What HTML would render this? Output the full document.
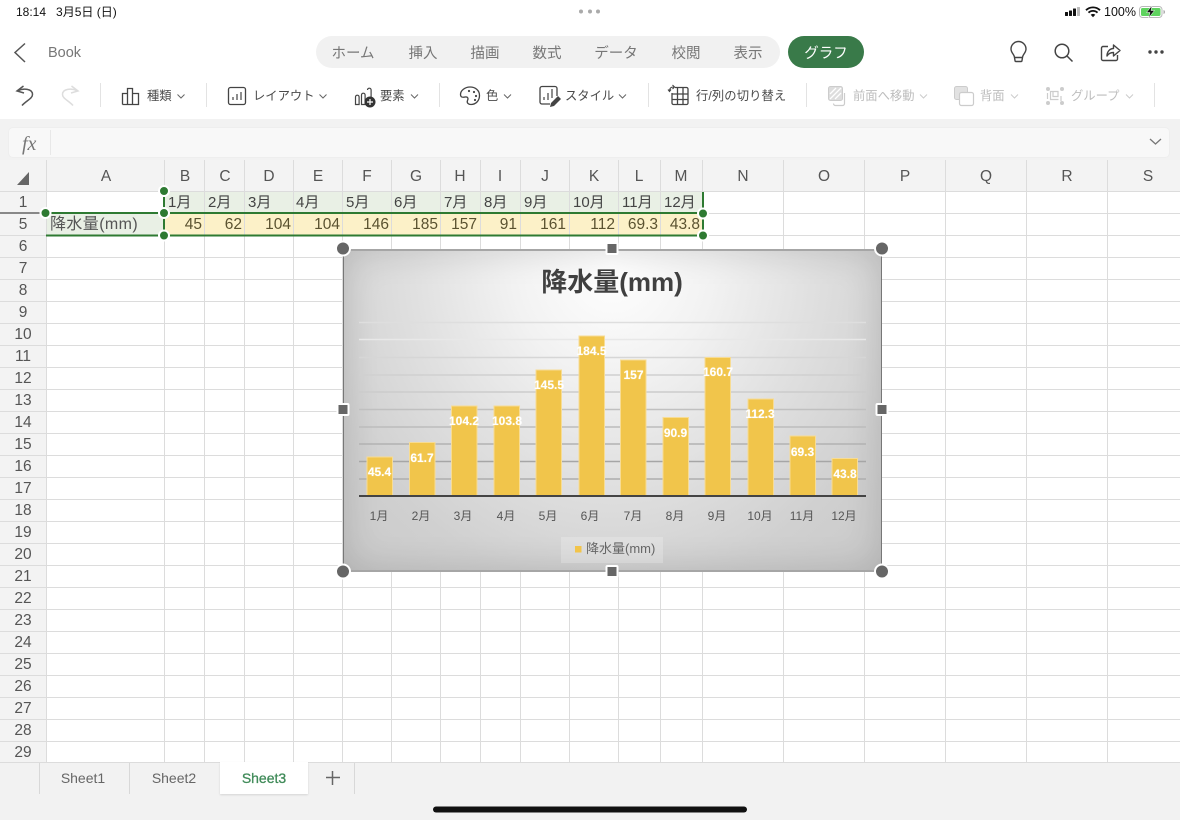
<!DOCTYPE html>
<html lang="ja"><head><meta charset="utf-8"><title>Book</title>
<style>
html,body{margin:0;padding:0;background:#fff}
#p{position:relative;width:1180px;height:820px;overflow:hidden;background:#fff;font-family:"Liberation Sans","Noto Sans CJK JP",sans-serif}
.t{position:absolute;white-space:nowrap;line-height:1}
.c{transform:translateX(-50%)}
svg{position:absolute;left:0;top:0;overflow:visible}
.tb{font-size:12.3px;color:#4a4a4a;top:90px}
.dis{color:#bdbdbd}
.tab{font-size:14.5px;color:#777;top:46.500px}
.col{font-size:15.5px;color:#555;top:169px}
.row{font-size:15.5px;color:#555}
.m{font-size:15px;color:#444;top:195px}
.v{font-size:15.5px;color:#5a5230;top:217px;text-align:right}
.bl{font-size:12px;font-weight:bold;color:#fff;text-shadow:0 0 1px rgba(255,255,255,.6)}
.cat{font-size:12px;color:#555;top:510px}
</style></head><body><div id="p">

<!-- status bar -->
<div class="t" style="left:16px;top:6px;font-size:12px;color:#111">18:14&nbsp;&nbsp;&nbsp;3月5日 (日)</div>
<svg width="1180" height="24">
<circle cx="581" cy="11.5" r="2" fill="#aaa"/><circle cx="590" cy="11.5" r="2" fill="#aaa"/><circle cx="598" cy="11.5" r="2" fill="#aaa"/>
<rect x="1065" y="12" width="3" height="4" rx=".5" fill="#111"/><rect x="1069" y="10.5" width="3" height="5.5" rx=".5" fill="#111"/><rect x="1073" y="8.5" width="3" height="7.5" rx=".5" fill="#111"/><rect x="1077" y="7" width="3" height="9" rx=".5" fill="#bbb"/>
<path d="M1086 10.2a10 10 0 0 1 14 0M1088.500 12.700a6.500 6.500 0 0 1 9 0" fill="none" stroke="#111" stroke-width="1.800"/><path d="M1090.700 14.800a3.400 3.400 0 0 1 4.600 0L1093 17.200z" fill="#111"/>
<rect x="1139.5" y="6.5" width="22.500" height="11" rx="3" fill="none" stroke="#b9b9b9"/><rect x="1141" y="8" width="19.500" height="8" rx="1.5" fill="#5fd35f"/><path d="M1163.500 10v4a2 2 0 0 0 1.500-2 2 2 0 0 0-1.500-2z" fill="#aaa"/>
<path d="M1152 5.5l-5.5 7h3.5l-1.5 5.5 6-7.5h-3.5z" fill="#111" stroke="#fff" stroke-width=".5"/>
</svg>
<div class="t" style="left:1104px;top:6px;font-size:12.500px;color:#111">100%</div>

<!-- top nav -->
<svg width="1180" height="120">
<path d="M25 43.5l-10 9 10 9.500" fill="none" stroke="#555" stroke-width="1.500"/>
<rect x="316" y="36" width="464" height="32" rx="16" fill="#f1f1f1"/>
<rect x="788" y="36" width="76" height="32" rx="16" fill="#397a49"/>
<path d="M1014.500 57.500c0-3-3.500-4.500-3.500-8.500a7.500 7.500 0 0 1 15 0c0 4-3.500 5.500-3.500 8.500zM1014.500 57.500l.5 3a1 1 0 0 0 1 1h5a1 1 0 0 0 1-1l.5-3" fill="none" stroke="#444" stroke-width="1.400" stroke-linejoin="round"/>
<circle cx="1062" cy="51" r="6.800" fill="none" stroke="#444" stroke-width="1.500"/><path d="M1067 56l5.500 5.500" stroke="#444" stroke-width="1.500"/>
<path d="M1108 46.500h-5a1.500 1.500 0 0 0-1.500 1.500v11a1.500 1.500 0 0 0 1.500 1.500h13a1.500 1.500 0 0 0 1.500-1.500v-4M1107 56c0-4.500 3-7.500 6.500-7.500V45l6.500 5.500-6.500 5.500v-3.500c-3 0-5 1-6.500 3.500z" fill="none" stroke="#444" stroke-width="1.400" stroke-linejoin="round"/>
<circle cx="1150" cy="52" r="1.700" fill="#444"/><circle cx="1156" cy="52" r="1.700" fill="#444"/><circle cx="1162" cy="52" r="1.700" fill="#444"/>
<!-- separators -->
<g stroke="#e3e3e3"><path d="M100.500 83v24M206.500 83v24M439.500 83v24M648.500 83v24M806.500 83v24M1154.500 83v24"/></g>
<!-- undo / redo -->
<path d="M23.500 86l-6.500 5 7 2M17.500 91c6-3 15-2.500 15 3.500 0 4-6 6-10.500 11" fill="none" stroke="#555" stroke-width="1.500"/>
<path d="M71.500 86l6.500 5-7 2M77.500 91c-6-3-15-2.500-15 3.500 0 4 6 6 10.500 11" fill="none" stroke="#ddd" stroke-width="1.500"/>
<!-- type -->
<path d="M122.500 104.500v-11h5v11M127.500 104.500v-16h5v16M132.500 104.500v-11h6v11zM122.500 104.500h16" fill="none" stroke="#444" stroke-width="1.300"/>
<path d="M177.500 94.500l3.500 3.500 3.500-3.500" fill="none" stroke="#666"/>
<!-- layout -->
<rect x="228.500" y="87.500" width="17" height="17" rx="2" fill="none" stroke="#444" stroke-width="1.300"/><path d="M233 100v-3M237 100v-6M241 100v-8" stroke="#444" stroke-width="1.200"/>
<path d="M319.500 94.500l3.500 3.500 3.500-3.500" fill="none" stroke="#666"/>
<!-- element -->
<path d="M355.500 97a1.800 1.800 0 0 1 3.600 0v7.500h-3.600zM361.500 95a1.800 1.800 0 0 1 3.600 0v9.500h-3.600zM367.500 90a1.800 1.800 0 0 1 3.600 0v8" fill="none" stroke="#444" stroke-width="1.200"/>
<circle cx="370" cy="102" r="5.500" fill="#333"/><path d="M367 102h6M370 99v6" stroke="#fff" stroke-width="1.200"/>
<path d="M411 94.500l3.500 3.500 3.500-3.500" fill="none" stroke="#666"/>
<!-- colour -->
<path d="M470 87c-5 0-9.500 3.500-9.500 7.500 0 3 2.500 3 4.500 2.500 3-.5 3.500 1.500 2.500 3.500-1 2.500 1 4 3.500 4 5 0 8.500-4 8.500-9 0-5-4-8.500-9.500-8.500z" fill="none" stroke="#444" stroke-width="1.300"/>
<circle cx="469" cy="91" r="1.100" fill="#444"/><circle cx="474" cy="92" r="1.100" fill="#444"/><circle cx="476" cy="96" r="1.100" fill="#444"/><circle cx="475" cy="100" r="1.100" fill="#444"/>
<path d="M504 94.500l3.500 3.500 3.500-3.500" fill="none" stroke="#666"/>
<!-- style -->
<path d="M550 104h-8a2 2 0 0 1-2-2V88.500a2 2 0 0 1 2-2h13a2 2 0 0 1 2 2v7.500" fill="none" stroke="#444" stroke-width="1.300"/><path d="M544 100v-3M548 100v-7M552 98v-9" stroke="#444" stroke-width="1.200"/>
<path d="M550 107l1-4 7-7 3 3-7 7z" fill="#444"/>
<path d="M619 94.500l3.500 3.500 3.500-3.500" fill="none" stroke="#666"/>
<!-- switch -->
<path d="M675 87.500h11.500a1.500 1.500 0 0 1 1.500 1.500v14a1.500 1.500 0 0 1-1.500 1.500h-13a1.500 1.500 0 0 1-1.500-1.500v-10M672 94h16M672 99.500h16M677.500 87.500v17M683 87.500v17" fill="none" stroke="#444" stroke-width="1.300"/>
<path d="M669.500 91c0-2.500 1.500-4 4-4M672.500 85l2 2-2 2M668 89.500l1.500 2 1.500-2" fill="none" stroke="#444" stroke-width="1.100"/>
<!-- bring forward -->
<rect x="828.500" y="86.500" width="14" height="14" rx="2" fill="#ddd" stroke="#ccc"/><path d="M830 94l6-6M830 99l11-11M835 99l6-6" stroke="#fff" stroke-width="1.300"/>
<path d="M844.500 93v10.500a2 2 0 0 1-2 2h-7a2 2 0 0 1-2-2" fill="none" stroke="#ccc" stroke-width="1.200"/>
<path d="M920 94.500l3.500 3.500 3.500-3.500" fill="none" stroke="#ccc"/>
<!-- send back -->
<rect x="954.500" y="86.500" width="13" height="13" rx="2" fill="#e2e2e2" stroke="#ccc"/><rect x="959.500" y="92.500" width="14" height="13" rx="2" fill="#fff" stroke="#ccc" stroke-width="1.200"/>
<path d="M1011 94.500l3.500 3.500 3.500-3.500" fill="none" stroke="#ccc"/>
<!-- group -->
<g fill="#ccc"><circle cx="1048" cy="89" r="2"/><circle cx="1062" cy="89" r="2"/><circle cx="1048" cy="103" r="2"/><circle cx="1062" cy="103" r="2"/></g>
<path d="M1053 91.500h5v5h-5zM1053 91.500h-2.500v8h8M1061 96v5M1047.500 93v6" fill="none" stroke="#ccc" stroke-width="1.200"/>
<path d="M1126 94.500l3.500 3.500 3.500-3.500" fill="none" stroke="#ccc"/>
</svg>
<div class="t" style="left:48px;top:46px;font-size:14.500px;color:#777">Book</div>
<div class="t c tab" style="left:353px">ホーム</div>
<div class="t c tab" style="left:423px">挿入</div>
<div class="t c tab" style="left:485px">描画</div>
<div class="t c tab" style="left:547px">数式</div>
<div class="t c tab" style="left:616px">データ</div>
<div class="t c tab" style="left:686px">校閲</div>
<div class="t c tab" style="left:748px">表示</div>
<div class="t c tab" style="left:826px;color:#fff">グラフ</div>
<div class="t tb" style="left:147px">種類</div>
<div class="t tb" style="left:253px">レイアウト</div>
<div class="t tb" style="left:380px">要素</div>
<div class="t tb" style="left:486px">色</div>
<div class="t tb" style="left:565px">スタイル</div>
<div class="t tb" style="left:696px;letter-spacing:.1px">行/列の切り替え</div>
<div class="t tb dis" style="left:853px">前面へ移動</div>
<div class="t tb dis" style="left:980px">背面</div>
<div class="t tb dis" style="left:1071px">グループ</div>

<!-- formula bar -->
<div style="position:absolute;left:0;top:119px;width:1180px;height:41px;background:#f2f2f2"></div>
<div style="position:absolute;left:9px;top:128px;width:1160px;height:29px;background:#f8f8f8;border-radius:4px;box-shadow:0 0 0 1px #eee"></div>
<div style="position:absolute;left:50px;top:130px;width:1px;height:25px;background:#e8e8e8"></div>
<div class="t" style="left:22px;top:133px;font:italic 20px 'Liberation Serif',serif;color:#777">fx</div>
<svg width="1180" height="160"><path d="M1150 139l5.500 5 5.500-5" fill="none" stroke="#777" stroke-width="1.300"/></svg>

<!-- sheet grid -->
<div style="position:absolute;left:0;top:160px;width:1180px;height:31px;background:#f3f3f3"></div>
<div style="position:absolute;left:0;top:160px;width:46px;height:602px;background:#f3f3f3"></div>
<div style="position:absolute;left:164px;top:192px;width:539px;height:21px;background:#e9f0e5"></div>
<div style="position:absolute;left:46px;top:214px;width:118px;height:21px;background:#e9f0e5"></div>
<div style="position:absolute;left:164px;top:214px;width:539px;height:21px;background:#fcf1c8"></div>
<svg width="1180" height="762">
<g stroke="#dcdcdc" fill="none">
<path d="M46.500 160v602M164.500 160v602M204.500 160v602M244.500 160v602M293.500 160v602M342.500 160v602M391.500 160v602M440.500 160v602M480.500 160v602M520.500 160v602M569.500 160v602M618.500 160v602M660.500 160v602M702.500 160v602M783.500 160v602M864.500 160v602M945.500 160v602M1026.500 160v602M1107.500 160v602"/>
<path d="M0 191.500h1180M0 213.500h1180M0 235.500h1180M0 257.500h1180M0 279.500h1180M0 301.500h1180M0 323.500h1180M0 345.500h1180M0 367.500h1180M0 389.500h1180M0 411.500h1180M0 433.500h1180M0 455.500h1180M0 477.500h1180M0 499.500h1180M0 521.500h1180M0 543.500h1180M0 565.500h1180M0 587.500h1180M0 609.500h1180M0 631.500h1180M0 653.500h1180M0 675.500h1180M0 697.500h1180M0 719.500h1180M0 741.500h1180"/>
</g>
<path d="M0 213h46" stroke="#888" stroke-width="2"/>
<path d="M29 172v13H17z" fill="#666"/>
<g stroke="#2e7a32" stroke-width="2" fill="none"><path d="M46 213h657M46 235.500h657M164 197v34M703 192v21M703 213v22"/></g>
<g fill="#2e7a32" stroke="#fff" stroke-width="2"><circle cx="164" cy="191" r="5"/><circle cx="45.500" cy="213" r="5"/><circle cx="164" cy="213" r="5"/><circle cx="703" cy="213.500" r="5"/><circle cx="164" cy="235.500" r="5"/><circle cx="703" cy="235.500" r="5"/></g>
</svg>

<div class="t c col" style="left:106px">A</div><div class="t c col" style="left:185px">B</div><div class="t c col" style="left:225px">C</div><div class="t c col" style="left:269px">D</div><div class="t c col" style="left:318px">E</div><div class="t c col" style="left:367px">F</div><div class="t c col" style="left:416px">G</div><div class="t c col" style="left:460px">H</div><div class="t c col" style="left:500px">I</div><div class="t c col" style="left:545px">J</div><div class="t c col" style="left:594px">K</div><div class="t c col" style="left:639px">L</div><div class="t c col" style="left:681px">M</div><div class="t c col" style="left:743px">N</div><div class="t c col" style="left:824px">O</div><div class="t c col" style="left:905px">P</div><div class="t c col" style="left:986px">Q</div><div class="t c col" style="left:1067px">R</div><div class="t c col" style="left:1148px">S</div>

<div class="t c row" style="left:23px;top:195px">1</div><div class="t c row" style="left:23px;top:217px">5</div><div class="t c row" style="left:23px;top:239px">6</div><div class="t c row" style="left:23px;top:261px">7</div><div class="t c row" style="left:23px;top:283px">8</div><div class="t c row" style="left:23px;top:305px">9</div><div class="t c row" style="left:23px;top:327px">10</div><div class="t c row" style="left:23px;top:349px">11</div><div class="t c row" style="left:23px;top:371px">12</div><div class="t c row" style="left:23px;top:393px">13</div><div class="t c row" style="left:23px;top:415px">14</div><div class="t c row" style="left:23px;top:437px">15</div><div class="t c row" style="left:23px;top:459px">16</div><div class="t c row" style="left:23px;top:481px">17</div><div class="t c row" style="left:23px;top:503px">18</div><div class="t c row" style="left:23px;top:525px">19</div><div class="t c row" style="left:23px;top:547px">20</div><div class="t c row" style="left:23px;top:569px">21</div><div class="t c row" style="left:23px;top:591px">22</div><div class="t c row" style="left:23px;top:613px">23</div><div class="t c row" style="left:23px;top:635px">24</div><div class="t c row" style="left:23px;top:657px">25</div><div class="t c row" style="left:23px;top:679px">26</div><div class="t c row" style="left:23px;top:701px">27</div><div class="t c row" style="left:23px;top:723px">28</div><div class="t c row" style="left:23px;top:745px">29</div>

<div class="t m" style="left:168px">1月</div><div class="t m" style="left:208px">2月</div><div class="t m" style="left:248px">3月</div><div class="t m" style="left:296px">4月</div><div class="t m" style="left:346px">5月</div><div class="t m" style="left:394px">6月</div><div class="t m" style="left:444px">7月</div><div class="t m" style="left:484px">8月</div><div class="t m" style="left:524px">9月</div><div class="t m" style="left:573px">10月</div><div class="t m" style="left:622px">11月</div><div class="t m" style="left:664px">12月</div>
<div class="t m" style="left:50px;top:217px;color:#555;font-size:16px;letter-spacing:.4px">降水量(mm)</div>
<div class="t v" style="right:978px">45</div><div class="t v" style="right:938px">62</div><div class="t v" style="right:889px">104</div><div class="t v" style="right:840px">104</div><div class="t v" style="right:791px">146</div><div class="t v" style="right:742px">185</div><div class="t v" style="right:703px">157</div><div class="t v" style="right:663px">91</div><div class="t v" style="right:614px">161</div><div class="t v" style="right:565px">112</div><div class="t v" style="right:522px">69.3</div><div class="t v" style="right:480px">43.8</div>

<!-- chart -->
<div style="position:absolute;left:343px;top:248.500px;width:539px;height:323px;box-sizing:border-box;border:2px solid #a6a6a6;border-left:1.500px solid #777;border-right:1.500px solid #777;box-shadow:inset 0 0 36px rgba(0,0,0,.14);background:radial-gradient(ellipse 400px 430px at 50% 5%,#fff 0%,#f2f2f2 25%,#e0e0e0 50%,#d0d0d0 75%,#c8c8c8 100%)"></div>
<svg width="1180" height="600">
<g fill="none" stroke-width="1.500">
<path d="M359 322.500h507" stroke="#dedede"/><path d="M359 339.500h507" stroke="#e8e8e8"/><path d="M359 357.500h507" stroke="#d6d6d6"/><path d="M359 375h507" stroke="#d0d0d0"/><path d="M359 392h507" stroke="#cccccc"/><path d="M359 409.500h507" stroke="#c0c0c0"/><path d="M359 427h507" stroke="#bcbcbc"/><path d="M359 444h507" stroke="#b2b2b2"/><path d="M359 461.500h507" stroke="#a6a6a6"/><path d="M359 479h507" stroke="#aeaeae"/>
</g>
<g fill="#f1c54b" stroke="#f7dc94" stroke-width="1">
<rect x="367" y="457" width="25.500" height="39"/><rect x="409.500" y="442.500" width="25.500" height="53.500"/><rect x="451.500" y="406" width="25.500" height="90"/><rect x="494" y="406" width="25.500" height="90"/><rect x="536" y="370" width="25.500" height="126"/><rect x="579" y="336" width="25.500" height="160"/><rect x="620.500" y="360" width="25.500" height="136"/><rect x="663" y="417.500" width="25.500" height="78.500"/><rect x="705" y="357.500" width="25.500" height="138.500"/><rect x="748" y="399" width="25.500" height="97"/><rect x="790" y="436" width="25.500" height="60"/><rect x="832" y="458.500" width="25.500" height="37.500"/>
</g>
<path d="M359 496h507" stroke="#444" stroke-width="2"/>
<rect x="561" y="537" width="102" height="26" fill="#fff" fill-opacity=".22"/>
<rect x="575" y="546" width="6.500" height="6.500" fill="#f2c44a"/>
<g fill="#666" stroke="#fff" stroke-width="2">
<circle cx="343" cy="248.500" r="7"/><circle cx="882" cy="248.500" r="7"/><circle cx="343" cy="571.500" r="7"/><circle cx="882" cy="571.500" r="7"/>
<rect x="606.500" y="243" width="11" height="11" rx="1"/><rect x="606.500" y="566" width="11" height="11" rx="1"/><rect x="337.500" y="404" width="11" height="11" rx="1"/><rect x="876.500" y="404" width="11" height="11" rx="1"/>
</g>
</svg>
<div class="t c" style="left:612px;top:269px;font-size:26px;font-weight:bold;color:#404040">降水量(mm)</div>
<div class="t c bl" style="left:379.500px;top:466px">45.4</div><div class="t c bl" style="left:422px;top:452px">61.7</div><div class="t c bl" style="left:464px;top:415px">104.2</div><div class="t c bl" style="left:507px;top:415px">103.8</div><div class="t c bl" style="left:549px;top:379px">145.5</div><div class="t c bl" style="left:591.500px;top:345px">184.5</div><div class="t c bl" style="left:633.500px;top:369px">157</div><div class="t c bl" style="left:675.500px;top:427px">90.9</div><div class="t c bl" style="left:718px;top:366px">160.7</div><div class="t c bl" style="left:760px;top:408px">112.3</div><div class="t c bl" style="left:802.500px;top:446px">69.3</div><div class="t c bl" style="left:845px;top:468px">43.8</div>
<div class="t c cat" style="left:379px">1月</div><div class="t c cat" style="left:421px">2月</div><div class="t c cat" style="left:463px">3月</div><div class="t c cat" style="left:506px">4月</div><div class="t c cat" style="left:548px">5月</div><div class="t c cat" style="left:590px">6月</div><div class="t c cat" style="left:633px">7月</div><div class="t c cat" style="left:675px">8月</div><div class="t c cat" style="left:717px">9月</div><div class="t c cat" style="left:760px">10月</div><div class="t c cat" style="left:802px">11月</div><div class="t c cat" style="left:844px">12月</div>
<div class="t" style="left:586px;top:542px;font-size:13px;color:#666">降水量(mm)</div>

<!-- sheet tabs -->
<div style="position:absolute;left:0;top:762px;width:1180px;height:58px;background:#f2f2f2;border-top:1px solid #dcdcdc;box-sizing:border-box"></div>
<div style="position:absolute;left:220px;top:762px;width:88px;height:32px;background:#fff;box-shadow:0 1px 2px rgba(0,0,0,.12)"></div>
<svg width="1180" height="820">
<path d="M39.500 763v31M129.500 763v31M354.500 763v31" stroke="#d8d8d8"/>
<path d="M326 777.500h14M332.500 771v14" stroke="#666" stroke-width="1.500"/>
<rect x="433" y="806.500" width="314" height="6" rx="3" fill="#111"/>
</svg>
<div class="t c" style="left:83px;top:771px;font-size:14px;color:#666">Sheet1</div>
<div class="t c" style="left:174px;top:771px;font-size:14px;color:#666">Sheet2</div>
<div class="t c" style="left:264px;top:771px;font-size:14px;color:#3f8a58;-webkit-text-stroke:.3px #3f8a58">Sheet3</div>
</div></body></html>
